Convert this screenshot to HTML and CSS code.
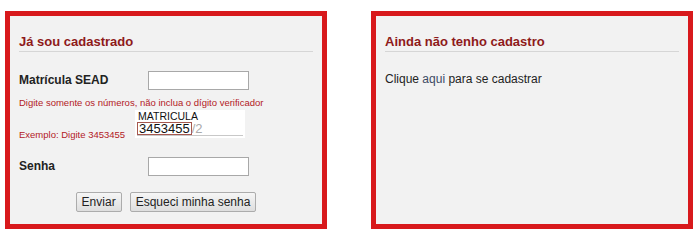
FILE: index.html
```html
<!DOCTYPE html>
<html lang="pt-BR">
<head>
    <meta charset="UTF-8">
    <title>Acesso</title>
    <link rel="stylesheet" href="styles.css">
</head>
<body>
    <div class="panels">
        <section class="panel">
            <h2>Já sou cadastrado</h2>
            <form class="login">
                <div class="field">
                    <label for="matricula">Matrícula SEAD</label>
                    <input type="text" id="matricula">
                </div>
                <p class="hint">Digite somente os números, não inclua o dígito verificador</p>
                <div class="example">
                    <span class="hint">Exemplo: Digite 3453455</span>
                    <div class="sample">
                        <div class="sample-title">MATRICULA</div>
                        <div class="sample-num"><span class="num">3453455</span><span class="dv">/2</span></div>
                    </div>
                </div>
                <div class="field">
                    <label for="senha">Senha</label>
                    <input type="password" id="senha">
                </div>
                <div class="actions">
                    <button type="submit">Enviar</button>
                    <button type="button">Esqueci minha senha</button>
                </div>
            </form>
        </section>
        <section class="panel">
            <h2>Ainda não tenho cadastro</h2>
            <p class="signup">Clique <a href="#">aqui</a> para se cadastrar</p>
        </section>
    </div>
</body>
</html>
```

FILE: styles.css
```css
body {
    margin: 0;
    padding: 11px 0 0 5px;
    background-color: #ffffff;
    font-family: "Liberation Sans", Arial, sans-serif;
    color: #222;
}

.panels {
    display: flex;
    gap: 44px;
}

.panel {
    box-sizing: border-box;
    width: 322px;
    height: 218px;
    border: 5px solid #d8191c;
    background-color: #f2f2f2;
    padding: 0 9px;
}

.panel h2 {
    margin: 18px 0 0;
    padding-bottom: 1px;
    font-size: 13px;
    line-height: 16px;
    font-weight: bold;
    color: #8e1a1a;
    border-bottom: 1px solid #d6d6d6;
}

.field {
    display: grid;
    grid-template-columns: 129px 101px;
    align-items: center;
    margin-top: 19px;
}

.field label {
    font-size: 12px;
    font-weight: bold;
    color: #222;
    padding-bottom: 2px;
}

.field input {
    box-sizing: border-box;
    height: 19px;
    width: 101px;
    margin: 0;
    border: 1px solid #a8a8a8;
    background: #fff;
}

.hint {
    margin: 7px 0 0;
    font-size: 9.5px;
    line-height: 11px;
    color: #b3201f;
}

.example {
    display: grid;
    grid-template-columns: 116px 110px;
    align-items: end;
    margin-top: 2px;
}

.example .hint {
    margin: 0 0 -2px;
}

.sample {
    background: #fff;
    padding: 1px 2px 2px;
    height: 28px;
    box-sizing: border-box;
}

.sample-title {
    font-size: 10.5px;
    line-height: 11px;
    color: #111;
    padding-left: 1px;
}

.sample-num {
    border-bottom: 1px solid #c8c8c8;
    width: 106px;
    line-height: 12px;
}

.num {
    display: inline-block;
    font-size: 13px;
    line-height: 11px;
    color: #111;
    border: 1px solid #a5584f;
    padding: 0 1px;
}

.dv {
    font-size: 13px;
    color: #aaa;
}

.actions {
    display: flex;
    justify-content: center;
    gap: 8px;
    margin-top: 16px;
}

.actions button {
    font-family: "Liberation Sans", Arial, sans-serif;
    font-size: 12px;
    height: 20px;
    padding: 0 5px;
    color: #222;
    border: 1px solid #acacac;
    border-radius: 2px;
    background: linear-gradient(#f6f6f6, #dedede);
}

.signup {
    margin: 20px 0 0;
    font-size: 12px;
    line-height: 14px;
    color: #222;
}

.signup a {
    color: #3d4a63;
    text-decoration: none;
}
```
